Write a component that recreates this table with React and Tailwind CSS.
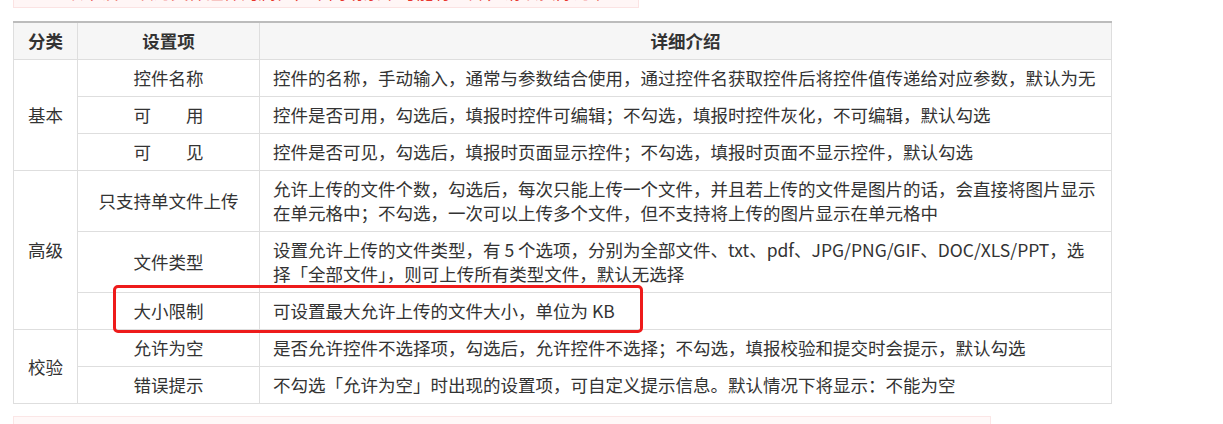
const rows = [
  {
    group: '基本',
    span: 3,
    name: '控件名称',
    lines: ['控件的名称，手动输入，通常与参数结合使用，通过控件名获取控件后将控件值传递给对应参数，默认为无'],
  },
  {
    name: '可　　用',
    lines: ['控件是否可用，勾选后，填报时控件可编辑；不勾选，填报时控件灰化，不可编辑，默认勾选'],
  },
  {
    name: '可　　见',
    lines: ['控件是否可见，勾选后，填报时页面显示控件；不勾选，填报时页面不显示控件，默认勾选'],
  },
  {
    group: '高级',
    span: 3,
    name: '只支持单文件上传',
    lines: [
      '允许上传的文件个数，勾选后，每次只能上传一个文件，并且若上传的文件是图片的话，会直接将图片显示',
      '在单元格中；不勾选，一次可以上传多个文件，但不支持将上传的图片显示在单元格中',
    ],
  },
  {
    name: '文件类型',
    lines: [
      '设置允许上传的文件类型，有 5 个选项，分别为全部文件、txt、pdf、JPG/PNG/GIF、DOC/XLS/PPT，选',
      '择「全部文件」，则可上传所有类型文件，默认无选择',
    ],
  },
  {
    name: '大小限制',
    lines: ['可设置最大允许上传的文件大小，单位为 KB'],
  },
  {
    group: '校验',
    span: 2,
    name: '允许为空',
    lines: ['是否允许控件不选择项，勾选后，允许控件不选择；不勾选，填报校验和提交时会提示，默认勾选'],
  },
  {
    name: '错误提示',
    lines: ['不勾选「允许为空」时出现的设置项，可自定义提示信息。默认情况下将显示：不能为空'],
  },
]

function App() {
  return (
    <div className="h-[424px] overflow-hidden bg-white px-[13px] font-['Noto_Sans_CJK_SC','Noto_Sans',sans-serif] text-[17.5px] leading-[24px] text-[#333]">
      <div className="-mt-[32px] flex h-[40px] w-[626px] items-end overflow-hidden border border-[#fbe3e3] bg-[#fff6f6] pb-[3px] pl-[52px] whitespace-nowrap text-[#e8342c]">
        以下设置项为文件控件的属性，不同场景中可能有差异，请以实际为准
      </div>

      <div className="relative mt-[13px] w-[1099px]">
        <table className="w-full table-fixed border-collapse">
          <colgroup>
            <col className="w-[64px]" />
            <col className="w-[182px]" />
            <col />
          </colgroup>
          <thead>
            <tr className="bg-[#f6f6f6]">
              <th className="border border-[#dedede] border-t-2 border-t-[#bcbcbc] py-[6px] text-center font-bold">分类</th>
              <th className="border border-[#dedede] border-t-2 border-t-[#bcbcbc] py-[6px] text-center font-bold">设置项</th>
              <th className="border border-[#dedede] border-t-2 border-t-[#bcbcbc] py-[6px] text-center font-bold">详细介绍</th>
            </tr>
          </thead>
          <tbody>
            {rows.map((row) => (
              <tr key={row.name}>
                {row.group && (
                  <td rowSpan={row.span} className="border border-[#dedede] text-center align-middle">
                    {row.group}
                  </td>
                )}
                <td className="border border-[#dedede] py-[6px] text-center whitespace-pre">{row.name}</td>
                <td className="border border-[#dedede] py-[6px] pl-[13px] pr-2">
                  {row.lines.map((line) => (
                    <div key={line} className="whitespace-nowrap">
                      {line}
                    </div>
                  ))}
                </td>
              </tr>
            ))}
          </tbody>
        </table>

        {/* highlight around the size limit row */}
        <div className="pointer-events-none absolute left-[100px] top-[264px] h-[48px] w-[530px] rounded-[5px] border-[3px] border-[#ee1b1b]" />
      </div>

      <div className="mt-[12px] h-[20px] w-[978px] border border-[#fbe6e6] bg-[#fff8f8]" />
    </div>
  )
}

export default App
